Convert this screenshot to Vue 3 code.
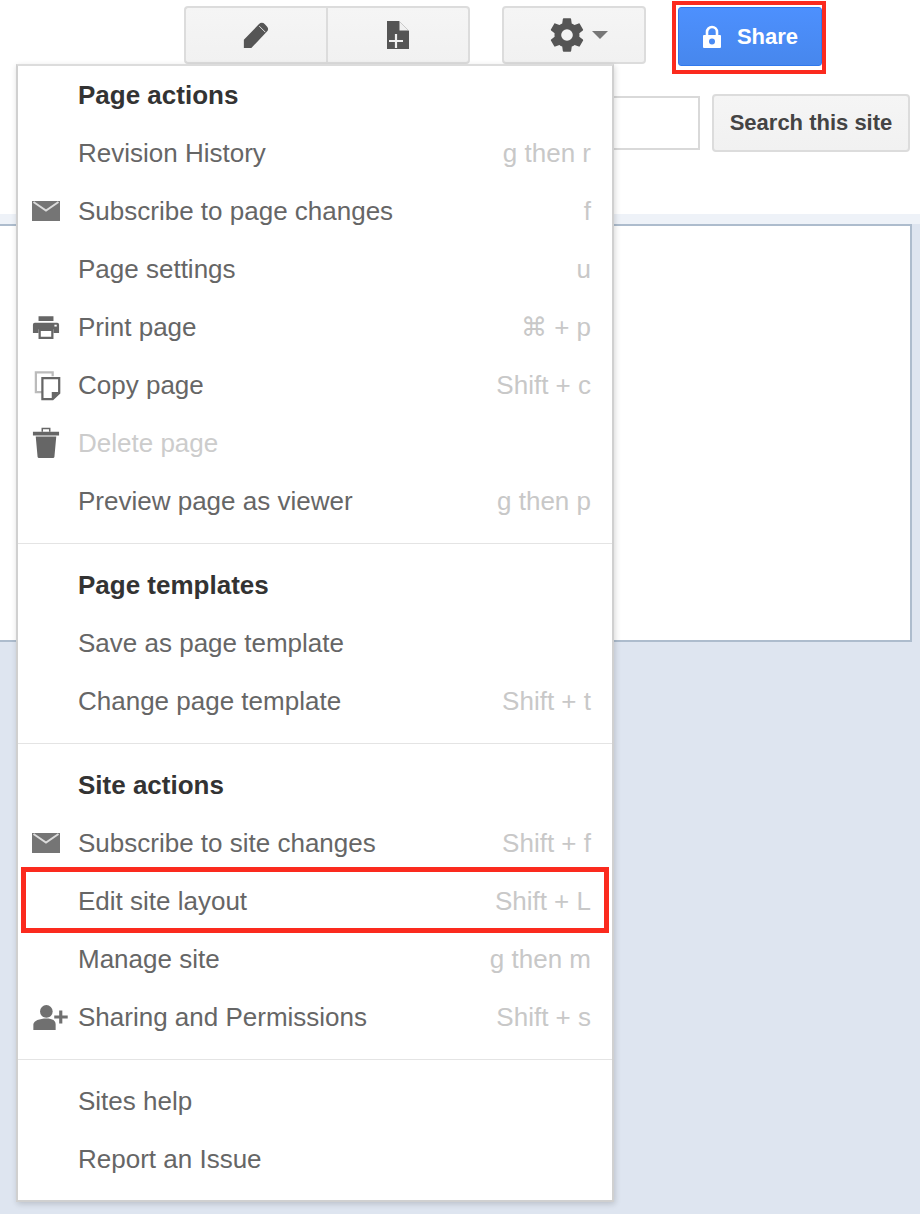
<template>
  <div class="page">
    <header class="top">
      <div class="toolbar">
        <div class="btn-group">
          <button class="btn tool">
            <svg width="28" height="28" viewBox="0 0 30 30"><path d="M2 29 L2 20 L18 3.5 C20 1.5 22.5 1.5 24.5 3.5 L26.5 5.5 C28.5 7.5 28.5 9.5 26.5 11.5 L10 29 Z" fill="#555"/><path d="M18.5 5.5 L25 12" stroke="#eee" stroke-width="1"/></svg>
          </button>
          <button class="btn tool">
            <svg width="22" height="28" viewBox="0 0 22 28"><path d="M0 0 H12 L22 10 V28 H0 Z" fill="#555"/><path d="M12.5 0.5 L21.5 9.5 H12.5 Z" fill="#f0f0f0"/><path d="M9 13 V27 M2 20 H16" stroke="#f0f0f0" stroke-width="2.2"/></svg>
          </button>
        </div>
        <button class="btn settings">
          <svg width="40" height="40" viewBox="0 0 24 24"><path fill="#555" d="M19.4 13c.04-.33.06-.66.06-1s-.02-.67-.06-1l2.1-1.65c.19-.15.24-.42.12-.64l-2-3.46c-.12-.22-.39-.3-.61-.22l-2.49 1c-.52-.4-1.08-.73-1.69-.98l-.38-2.65A.49.49 0 0 0 14 2h-4c-.25 0-.46.18-.49.42l-.38 2.65c-.61.25-1.17.59-1.69.98l-2.49-1c-.23-.09-.49 0-.61.22l-2 3.46c-.13.22-.07.49.12.64L4.57 11c-.04.33-.07.67-.07 1s.03.67.07 1l-2.11 1.65c-.19.15-.24.42-.12.64l2 3.46c.12.22.39.3.61.22l2.49-1c.52.4 1.08.73 1.69.98l.38 2.65c.03.24.24.42.49.42h4c.25 0 .46-.18.49-.42l.38-2.65c.61-.25 1.17-.59 1.69-.98l2.49 1c.23.09.49 0 .61-.22l2-3.46c.12-.22.07-.49-.12-.64L19.4 13zM12 15.5a3.5 3.5 0 1 1 0-7 3.5 3.5 0 0 1 0 7z"/></svg>
          <span class="caret"></span>
        </button>
        <div class="share-mark">
          <button class="share">
            <svg width="20" height="24" viewBox="0 0 20 24"><path fill="none" stroke="#fff" stroke-width="2.6" d="M5 11 V7 a5 5 0 0 1 10 0 V11"/><path fill="#fff" fill-rule="evenodd" d="M2 10 H18 a1 1 0 0 1 1 1 V22 a1 1 0 0 1 -1 1 H2 a1 1 0 0 1 -1 -1 V11 a1 1 0 0 1 1 -1 Z M10 13.5 a3 3 0 1 0 0 6 a3 3 0 0 0 0 -6 Z"/></svg>
            <span>Share</span>
          </button>
        </div>
      </div>
      <div class="search-row">
        <input class="search-input" type="text" />
        <button class="btn search-btn">Search this site</button>
      </div>
    </header>

    <main class="content">
      <div class="panel"></div>
    </main>

    <nav class="menu">
      <section v-for="(group, g) in groups" :key="g" class="group">
        <div v-if="group.title" class="row heading">{{ group.title }}</div>
        <div
          v-for="item in group.items"
          :key="item.label"
          class="row"
          :class="{ disabled: item.disabled, marked: item.marked }"
        >
          <span class="icon">
            <svg v-if="item.icon === 'mail'" width="28" height="20" viewBox="0 0 28 20"><path fill="#757575" d="M0 0 H28 V20 H0 Z"/><path fill="none" stroke="#dcdcdc" stroke-width="2" d="M1.5 1 L14 9.5 L26.5 1"/></svg>
            <svg v-else-if="item.icon === 'print'" width="28" height="25" viewBox="0 0 30 26"><path fill="#666" d="M7 1 H23 V6 H7 Z M3 8 H27 a2 2 0 0 1 2 2 V19 H23 V15 H7 V19 H1 V10 a2 2 0 0 1 2 -2 Z"/><path fill="#fff" d="M24 10 h2.5 v2 h-2.5 Z"/><path fill="none" stroke="#666" stroke-width="2.4" d="M8.2 15.5 H21.8 V24.2 H8.2 Z"/></svg>
            <svg v-else-if="item.icon === 'copy'" class="copy-icon" width="28" height="31" viewBox="0 0 30 32"><path fill="none" stroke="#bbb" stroke-width="2.4" d="M9 23 H2 V2 H20 V6"/><path fill="none" stroke="#666" stroke-width="2.4" d="M9 8 H27 V24 L20 30.5 H9 Z"/><path fill="#666" d="M19 23 H27 L19 31 Z"/></svg>
            <svg v-else-if="item.icon === 'trash'" width="28" height="32" viewBox="0 0 30 34"><path fill="none" stroke="#666" stroke-width="1.6" d="M11 5 V1.5 H19 V5"/><path fill="#666" d="M1 5 H29 V9 H1 Z M4 10 H26 L24 32 a1.5 1.5 0 0 1 -1.5 1 H7.5 A1.5 1.5 0 0 1 6 32 Z"/></svg>
            <svg v-else-if="item.icon === 'person'" width="38" height="26" viewBox="0 0 38 28"><circle cx="14" cy="8" r="6.8" fill="#707070"/><path fill="#707070" d="M0 28 V22 C0 18 7 15.5 14 15.5 S24 18 24 22 V28 Z"/><path stroke="#707070" stroke-width="3.4" d="M29.5 7 V21 M22.5 14 H37"/></svg>
          </span>
          <span class="label">{{ item.label }}</span>
          <span v-if="item.keys" class="keys">{{ item.keys }}</span>
        </div>
      </section>
    </nav>
  </div>
</template>

<script setup>
const groups = [
  {
    title: 'Page actions',
    items: [
      { label: 'Revision History', keys: 'g then r' },
      { label: 'Subscribe to page changes', keys: 'f', icon: 'mail' },
      { label: 'Page settings', keys: 'u' },
      { label: 'Print page', keys: '⌘ + p', icon: 'print' },
      { label: 'Copy page', keys: 'Shift + c', icon: 'copy' },
      { label: 'Delete page', icon: 'trash', disabled: true },
      { label: 'Preview page as viewer', keys: 'g then p' }
    ]
  },
  {
    title: 'Page templates',
    items: [
      { label: 'Save as page template' },
      { label: 'Change page template', keys: 'Shift + t' }
    ]
  },
  {
    title: 'Site actions',
    items: [
      { label: 'Subscribe to site changes', keys: 'Shift + f', icon: 'mail' },
      { label: 'Edit site layout', keys: 'Shift + L', marked: true },
      { label: 'Manage site', keys: 'g then m' },
      { label: 'Sharing and Permissions', keys: 'Shift + s', icon: 'person' }
    ]
  },
  {
    items: [
      { label: 'Sites help' },
      { label: 'Report an Issue' }
    ]
  }
]
</script>

<style>
html, body {
  margin: 0;
  background: #dee5f0;
}
</style>

<style scoped>
.page {
  position: relative;
  width: 920px;
  height: 1214px;
  overflow: hidden;
  display: flex;
  flex-direction: column;
  font-family: "Liberation Sans", Arial, sans-serif;
}

.top {
  height: 214px;
  box-sizing: border-box;
  background: #fff;
  padding-top: 6px;
}

.toolbar {
  display: flex;
  align-items: flex-start;
  padding-left: 184px;
}

.btn {
  box-sizing: border-box;
  border: 2px solid #dcdcdc;
  border-radius: 4px;
  background: linear-gradient(#f5f5f5, #f1f1f1);
  display: flex;
  align-items: center;
  justify-content: center;
  padding: 0;
  font-family: inherit;
}

.btn-group {
  display: flex;
  width: 286px;
  height: 58px;
}

.tool {
  flex: 1;
  height: 58px;
}

.tool:first-child {
  border-right: none;
  border-radius: 4px 0 0 4px;
}

.tool:last-child {
  border-radius: 0 4px 4px 0;
}

.settings {
  width: 144px;
  height: 58px;
  margin-left: 32px;
  gap: 5px;
  padding-left: 7px;
}

.caret {
  width: 0;
  height: 0;
  border-left: 8px solid transparent;
  border-right: 8px solid transparent;
  border-top: 8px solid #777;
}

.share-mark {
  box-sizing: border-box;
  width: 154px;
  height: 73px;
  margin: -5px 0 0 26px;
  border: 4px solid #fb2a1e;
  padding: 2px 0 2px 2px;
}

.share {
  box-sizing: border-box;
  width: 144px;
  height: 59px;
  border: 1px solid #3079ed;
  border-radius: 3px;
  background: linear-gradient(#4d90fe, #4787ed);
  color: #fff;
  font: bold 22px "Liberation Sans", Arial, sans-serif;
  display: flex;
  align-items: center;
  justify-content: center;
  gap: 15px;
  padding: 0;
}

.search-row {
  display: flex;
  align-items: center;
  justify-content: flex-end;
  gap: 12px;
  margin-top: 20px;
  padding-right: 10px;
}

.search-input {
  box-sizing: border-box;
  width: 200px;
  height: 54px;
  border: 2px solid #d9d9d9;
  background: #fff;
}

.search-btn {
  width: 198px;
  height: 58px;
  color: #444;
  font-size: 22px;
  font-weight: bold;
}

.content {
  flex: 1;
  background: linear-gradient(#eef2f8 10px, #dee5f0 10px);
  padding: 10px 8px 0 0;
}

.panel {
  box-sizing: border-box;
  height: 418px;
  background: #fff;
  border: 2px solid #adbccd;
  border-left: none;
}

.menu {
  position: absolute;
  left: 16px;
  top: 64px;
  box-sizing: border-box;
  width: 598px;
  background: #fff;
  border: 2px solid #d0d0d0;
  border-top-color: #dcdcdc;
  box-shadow: 1px 2px 6px rgba(0, 0, 0, 0.16);
}

.group {
  padding-bottom: 13px;
  border-bottom: 1px solid #e4e4e4;
  margin-bottom: 12px;
}

.group:last-child {
  border-bottom: none;
  margin-bottom: 0;
  padding-bottom: 12px;
}

.row {
  position: relative;
  display: flex;
  align-items: center;
  height: 58px;
  padding: 0 21px 0 60px;
  font-size: 26px;
  color: #666;
}

.heading {
  color: #333;
  font-weight: bold;
}

.icon {
  position: absolute;
  left: 14px;
  top: 0;
  bottom: 0;
  display: flex;
  align-items: center;
}

.copy-icon {
  margin-left: 2px;
}

.label {
  flex: 1;
}

.keys {
  color: #c8c8c8;
}

.disabled .label {
  color: #ccc;
}

.marked::after {
  content: "";
  position: absolute;
  left: 3px;
  right: 3px;
  top: -5px;
  bottom: -3px;
  border: 5px solid #fb2a1e;
  pointer-events: none;
}
</style>
